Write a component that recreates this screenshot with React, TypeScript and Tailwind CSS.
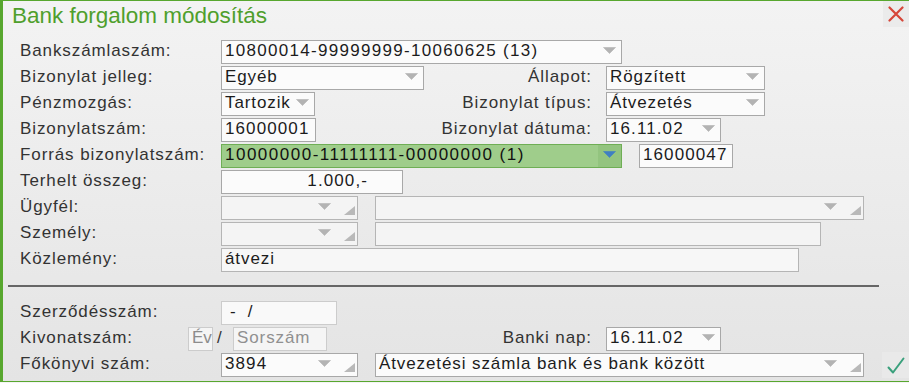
import React from "react";

const Arrow = ({ color = "#b3b3b3" }: { color?: string }) => (
  <svg width="13" height="7" viewBox="0 0 13 7" className="block">
    <path d="M0.5 0.5 H12.5 L6.5 6.5 Z" fill={color} stroke={color} strokeWidth="0.6" strokeLinejoin="round" />
  </svg>
);

const Grip = () => (
  <svg width="11" height="9" viewBox="0 0 11 9" className="block">
    <path d="M11 0 V9 H0 Z" fill="#b9b9b9" />
  </svg>
);

type BoxProps = {
  w: string;
  children?: React.ReactNode;
  arrow?: boolean;
  grip?: boolean;
  cls?: string;
  textCls?: string;
};

const Box = ({ w, children, arrow, grip, cls = "", textCls = "" }: BoxProps) => (
  <div className={`mt-[1px] flex h-[24px] shrink-0 border ${w} ${cls || "border-[#a8a8a8] bg-[#fbfbfb]"}`}>
    <div className={`min-w-0 flex-1 whitespace-nowrap pl-[3px] pt-[1px] text-[17px] leading-[17px] text-[#1c1c1c] ${textCls || "tracking-[0.9px]"}`}>
      {children}
    </div>
    {arrow && (
      <div className={`mt-[6px] shrink-0 ${grip ? "mr-[13px]" : "mr-[5px]"}`}>
        <Arrow />
      </div>
    )}
    {grip && (
      <div className="mr-[2px] mt-[9px] shrink-0">
        <Grip />
      </div>
    )}
  </div>
);

const Label = ({ w = "w-[201px]", children }: { w?: string; children: React.ReactNode }) => (
  <div className={`mt-[3px] shrink-0 whitespace-nowrap text-[17px] leading-[17px] tracking-[0.9px] text-[#333333] ${w}`}>{children}</div>
);

const RLabel = ({ children }: { children: React.ReactNode }) => (
  <div className="mt-[3px] min-w-0 flex-1 whitespace-nowrap pr-[14px] text-right text-[17px] leading-[17px] tracking-[0.9px] text-[#333333]">
    {children}
  </div>
);

const Row = ({ children }: { children: React.ReactNode }) => <div className="flex h-[26px] items-start pl-[17px]">{children}</div>;

export default function App() {
  return (
    <div className="h-[383px] w-[909px] overflow-hidden bg-[#f4f4f4] font-['Liberation_Sans',Arial,sans-serif]">
      <div className="flex h-[382px] flex-col border-b border-l-[3px] border-t border-[#58a72f] bg-gradient-to-b from-[#f3f3f3] to-[#e4e4e4]">
        {/* header */}
        <div className="flex h-[38px] shrink-0 items-start justify-between">
          <div className="pl-[9px] pt-[4px] text-[22.5px] leading-[22.5px] text-[#4f9f2c]">Bank forgalom módosítás</div>
          <div className="flex h-[26px] w-[26px] items-center justify-center bg-[#ebebeb]">
            <svg width="16" height="16" viewBox="0 0 16 16">
              <path d="M1.5 1.5 L14.5 14.5 M14.5 1.5 L1.5 14.5" stroke="#d6473a" strokeWidth="2.2" strokeLinecap="round" />
            </svg>
          </div>
        </div>

        {/* upper section */}
        <Row>
          <Label>Bankszámlaszám:</Label>
          <Box w="w-[401px]" arrow textCls="tracking-[1.3px]">
            10800014-99999999-10060625 (13)
          </Box>
        </Row>
        <Row>
          <div className="flex w-[586px] shrink-0 items-start">
            <Label>Bizonylat jelleg:</Label>
            <Box w="w-[203px]" arrow>
              Egyéb
            </Box>
            <RLabel>Állapot:</RLabel>
          </div>
          <Box w="w-[159px]" arrow>
            Rögzített
          </Box>
        </Row>
        <Row>
          <div className="flex w-[586px] shrink-0 items-start">
            <Label>Pénzmozgás:</Label>
            <Box w="w-[94px]" arrow>
              Tartozik
            </Box>
            <RLabel>Bizonylat típus:</RLabel>
          </div>
          <Box w="w-[159px]" arrow>
            Átvezetés
          </Box>
        </Row>
        <Row>
          <div className="flex w-[586px] shrink-0 items-start">
            <Label>Bizonylatszám:</Label>
            <Box w="w-[95px]" textCls="tracking-[1.1px]">16000001</Box>
            <RLabel>Bizonylat dátuma:</RLabel>
          </div>
          <Box w="w-[115px]" arrow textCls="tracking-[1.1px]">
            16.11.02
          </Box>
        </Row>
        <Row>
          <Label>Forrás bizonylatszám:</Label>
          <div className="relative mt-[1px] flex h-[24px] w-[401px] shrink-0 border border-[#6fae55] bg-[#9fcd8b]">
            <div className="min-w-0 flex-1 overflow-hidden whitespace-nowrap pl-[3px] pt-[1px] text-[17px] leading-[17px] tracking-[1.5px] text-[#111]">
              10000000-11111111-00000000 (1)
            </div>
            <div className="flex w-[23px] shrink-0 justify-center bg-[#93c47f] pt-[6px]">
              <Arrow color="#3f7fc2" />
            </div>
          </div>
          <div className="ml-[17px]">
            <Box w="w-[94px]" textCls="tracking-[1.1px]">16000047</Box>
          </div>
        </Row>
        <Row>
          <Label>Terhelt összeg:</Label>
          <Box w="w-[182px]" textCls="tracking-[1.1px] text-right pr-[34px]">
            1.000,-
          </Box>
        </Row>
        <Row>
          <Label>Ügyfél:</Label>
          <Box w="w-[137px]" arrow grip cls="border-[#b5b5b5] bg-[#f4f4f4]" />
          <div className="ml-[17px]">
            <Box w="w-[489px]" arrow grip cls="border-[#b5b5b5] bg-[#f4f4f4]" />
          </div>
        </Row>
        <Row>
          <Label>Személy:</Label>
          <Box w="w-[137px]" arrow grip cls="border-[#b5b5b5] bg-[#f4f4f4]" />
          <div className="ml-[17px]">
            <Box w="w-[446px]" cls="border-[#b5b5b5] bg-[#f4f4f4]" />
          </div>
        </Row>
        <Row>
          <Label>Közlemény:</Label>
          <Box w="w-[578px]" cls="border-[#b5b5b5] bg-[#f7f7f7]">
            átvezi
          </Box>
        </Row>

        {/* separator */}
        <div className="ml-[5px] mt-[12px] h-[2px] w-[871px] shrink-0 bg-[#666666]" />

        {/* lower section */}
        <div className="mt-[13px]">
          <Row>
            <Label>Szerződésszám:</Label>
            <Box w="w-[116px]" cls="border-[#cccccc] bg-[#f9f9f9]" textCls="pl-[8px] tracking-[0.9px]">
              -&nbsp;&nbsp;/
            </Box>
          </Row>
          <Row>
            <div className="flex w-[586px] shrink-0 items-start">
              <Label w="w-[168px]">Kivonatszám:</Label>
              <Box w="w-[25px]" cls="border-[#cccccc] bg-[#f5f5f5]" textCls="pl-[1px] text-[#8c8c8c] tracking-[0px]">
                Év
              </Box>
              <div className="mt-[3px] w-[20px] shrink-0 pl-[4px] text-[17px] leading-[17px] text-[#333]">/</div>
              <Box w="w-[94px]" cls="border-[#cccccc] bg-[#f5f5f5]" textCls="text-[#909090] tracking-[0.9px]">
                Sorszám
              </Box>
              <RLabel>Banki nap:</RLabel>
            </div>
            <Box w="w-[115px]" arrow textCls="tracking-[1.1px]">
              16.11.02
            </Box>
          </Row>
          <Row>
            <Label>Főkönyvi szám:</Label>
            <Box w="w-[137px]" arrow grip textCls="tracking-[1.1px]">
              3894
            </Box>
            <div className="ml-[17px]">
              <Box w="w-[489px]" arrow grip>
                Átvezetési számla bank és bank között
              </Box>
            </div>
            <div className="ml-auto flex h-[26px] w-[27px] items-center justify-center bg-[#e9e9e9]">
              <svg width="18" height="17" viewBox="0 0 18 17">
                <path d="M1.5 10.5 L6 15.5 L16.5 1.5" fill="none" stroke="#3aa07c" strokeWidth="2" strokeLinecap="round" strokeLinejoin="round" />
              </svg>
            </div>
          </Row>
        </div>
      </div>
    </div>
  );
}
